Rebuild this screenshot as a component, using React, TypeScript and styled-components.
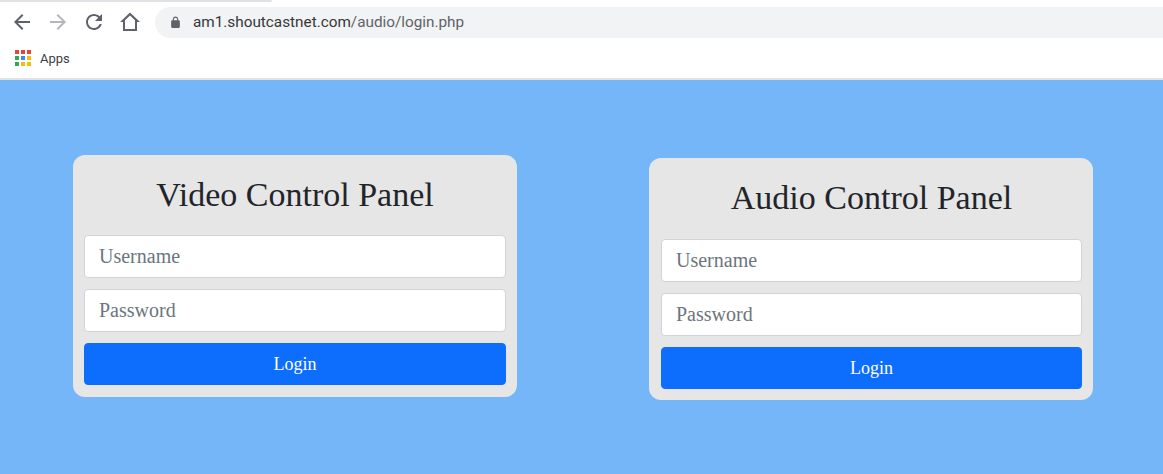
import React from "react";
import styled, { createGlobalStyle } from "styled-components";

const GlobalReset = createGlobalStyle`
  html, body {
    margin: 0;
    padding: 0;
    background: #74b6f8;
  }
  * {
    box-sizing: border-box;
  }
`;

const appsColors = [
  "#ea4335", "#ea4335", "#ea4335",
  "#34a853", "#4285f4", "#fbbc05",
  "#34a853", "#fbbc05", "#fbbc05",
];

const panels = [
  { title: "Video Control Panel", offset: 0, inset: 11, head: 80 },
  { title: "Audio Control Panel", offset: 3, inset: 12, head: 81 },
];

const App = () => {
  return (
    <Page>
      <GlobalReset />
      <Chrome>
        <TabStrip />
        <Toolbar>
          <NavIcon viewBox="0 0 24 24" $left={10} fill="#5f6368">
            <path d="M20 11H7.83l5.59-5.59L12 4l-8 8 8 8 1.41-1.41L7.83 13H20v-2z" />
          </NavIcon>
          <NavIcon viewBox="0 0 24 24" $left={12} fill="#b4b6b9">
            <path d="M12 4l-1.41 1.41L16.17 11H4v2h12.17l-5.58 5.59L12 20l8-8z" />
          </NavIcon>
          <NavIcon viewBox="0 0 24 24" $left={12} fill="#5f6368">
            <path d="M17.65 6.35C16.2 4.9 14.21 4 12 4c-4.42 0-7.99 3.58-7.99 8s3.57 8 7.99 8c3.73 0 6.84-2.55 7.73-6h-2.08c-.82 2.33-3.04 4-5.65 4-3.31 0-6-2.69-6-6s2.69-6 6-6c1.66 0 3.14.69 4.22 1.78L13 11h7V4l-2.35 2.35z" />
          </NavIcon>
          <NavIcon viewBox="0 0 24 24" $left={12} fill="#5f6368">
            <path
              fillRule="evenodd"
              d="M12 2.5L2 12h3v9h14v-9h3L12 2.5zM12 5.4l5 4.8V19H7v-8.8l5-4.8z"
            />
          </NavIcon>
          <AddressBar>
            <LockIcon viewBox="0 0 24 24" fill="#5f6368">
              <path d="M18 8h-1V6c0-2.76-2.24-5-5-5S7 3.24 7 6v2H6c-1.1 0-2 .9-2 2v10c0 1.1.9 2 2 2h12c1.1 0 2-.9 2-2V10c0-1.1-.9-2-2-2zM9 6c0-1.66 1.34-3 3-3s3 1.34 3 3v2H9V6z" />
            </LockIcon>
            <Host>am1.shoutcastnet.com</Host>
            <UrlPath>/audio/login.php</UrlPath>
          </AddressBar>
        </Toolbar>
        <Bookmarks>
          <AppsGrid>
            {appsColors.map((color, i) => (
              <AppsDot key={i} $color={color} />
            ))}
          </AppsGrid>
          <AppsLabel>Apps</AppsLabel>
        </Bookmarks>
      </Chrome>
      <Stage>
        {panels.map((panel) => (
          <Card key={panel.title} $offset={panel.offset} $inset={panel.inset}>
            <Title $head={panel.head}>{panel.title}</Title>
            <Field type="text" placeholder="Username" />
            <Field type="password" placeholder="Password" />
            <LoginButton type="button">Login</LoginButton>
          </Card>
        ))}
      </Stage>
    </Page>
  );
};

export default App;

const Page = styled.div`
  width: 1163px;
  height: 474px;
  overflow: hidden;
  background: #74b6f8;
`;

const Chrome = styled.div`
  height: 80px;
  background: #fff;
  border-bottom: 2px solid #dfe1e3;
`;

const TabStrip = styled.div`
  width: 272px;
  height: 2px;
  background: #dee1e6;
  border-bottom-right-radius: 4px;
`;

const Toolbar = styled.div`
  display: flex;
  align-items: center;
  height: 36px;
  margin-top: 2px;
`;

const NavIcon = styled.svg<{ $left: number }>`
  width: 24px;
  height: 24px;
  flex: none;
  margin-left: ${(p) => p.$left}px;
`;

const AddressBar = styled.div`
  display: flex;
  align-items: center;
  flex: 1;
  height: 31px;
  margin-left: 13px;
  padding-left: 14px;
  background: #f1f3f4;
  border-radius: 16px 0 0 16px;
  font-family: "Roboto", "Liberation Sans", sans-serif;
  font-size: 15.3px;
`;

const LockIcon = styled.svg`
  width: 13px;
  height: 13px;
  flex: none;
  margin-right: 11px;
`;

const Host = styled.span`
  color: #35373a;
`;

const UrlPath = styled.span`
  color: #5f6368;
`;

const Bookmarks = styled.div`
  display: flex;
  align-items: center;
  height: 30px;
  margin-top: 3px;
  padding-left: 15px;
`;

const AppsGrid = styled.div`
  display: grid;
  grid-template-columns: repeat(3, 4px);
  grid-auto-rows: 4px;
  gap: 2px;
`;

const AppsDot = styled.span<{ $color: string }>`
  background: ${(p) => p.$color};
`;

const AppsLabel = styled.span`
  margin-left: 9px;
  font-family: "Roboto", "Liberation Sans", sans-serif;
  font-size: 13px;
  color: #3c4043;
`;

const Stage = styled.div`
  display: flex;
  align-items: flex-start;
  gap: 132px;
  padding: 75px 0 0 73px;
`;

const Card = styled.div<{ $offset: number; $inset: number }>`
  display: flex;
  flex-direction: column;
  width: 444px;
  height: 242px;
  margin-top: ${(p) => p.$offset}px;
  padding: 0 11px 0 ${(p) => p.$inset}px;
  background: #e6e6e6;
  border-radius: 12px;
`;

const Title = styled.h2<{ $head: number }>`
  height: ${(p) => p.$head}px;
  margin: 0;
  font-family: "Liberation Serif", "Times New Roman", serif;
  font-size: 34px;
  font-weight: 400;
  line-height: 80px;
  text-align: center;
  color: #212529;
`;

const Field = styled.input`
  display: block;
  width: 100%;
  height: 43px;
  margin-bottom: 11px;
  padding: 0 14px;
  background: #fff;
  border: 1px solid #ced4da;
  border-radius: 4px;
  font-family: "Liberation Serif", "Times New Roman", serif;
  font-size: 20px;
  outline: none;

  &::placeholder {
    color: #6c757d;
    opacity: 1;
  }
`;

const LoginButton = styled.button`
  width: 100%;
  height: 42px;
  padding: 0;
  background: #0d6efd;
  border: 1px solid #0d6efd;
  border-radius: 4px;
  font-family: "Liberation Serif", "Times New Roman", serif;
  font-size: 18px;
  color: #fff;
`;
